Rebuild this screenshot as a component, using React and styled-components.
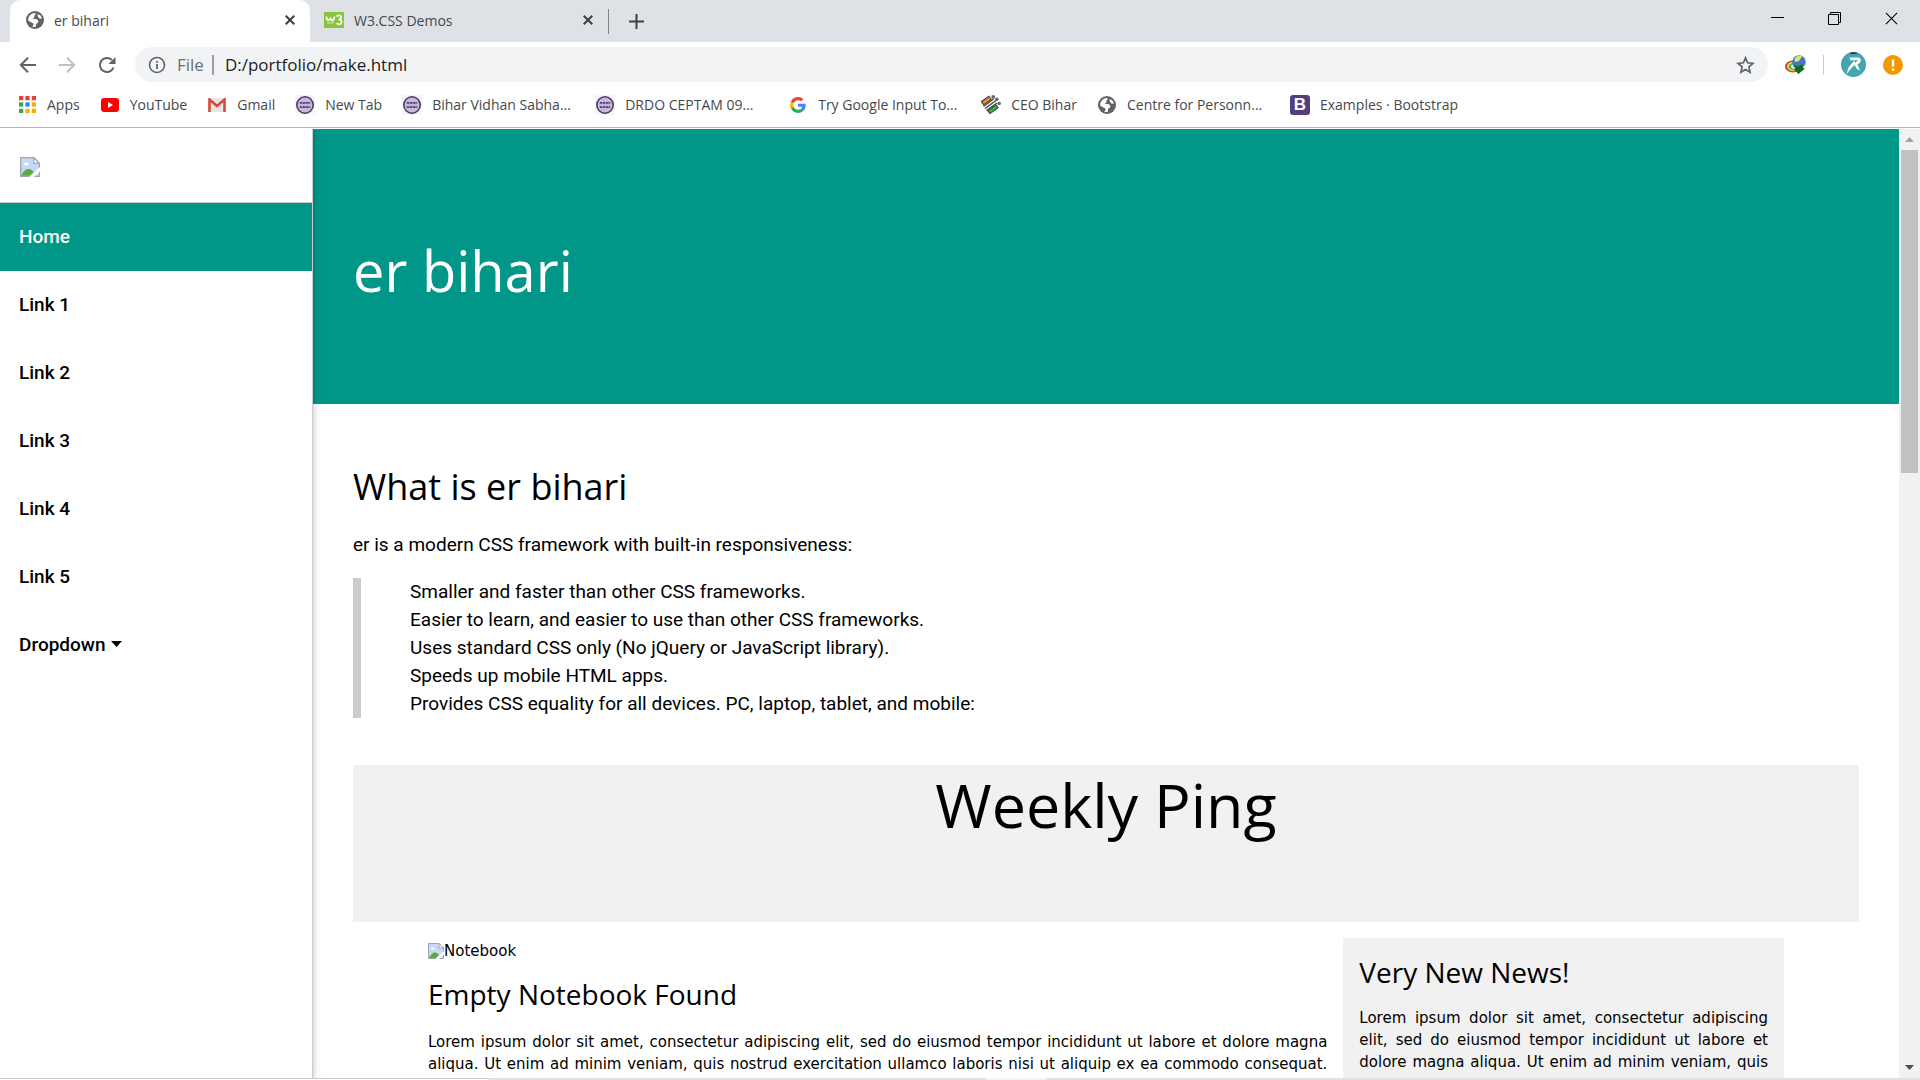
import React from "react";
import styled, { createGlobalStyle, css } from "styled-components";

const UI = '"Open Sans", "Noto Sans", sans-serif';
const BODY = 'Roboto, sans-serif';
const WIDE = '"DejaVu Sans", sans-serif';
const TEAL = "#009688";

const Global = createGlobalStyle`
  *, *::before, *::after { box-sizing: border-box; }
  html, body, #root { height: 100%; margin: 0; }
  body { background: #fff; color: #000; font-family: ${BODY}; overflow: hidden; }
  h1, h2, p, ul { margin: 0; padding: 0; font-weight: 400; }
  button { border: 0; background: none; padding: 0; font: inherit; color: inherit; }
  a { color: inherit; text-decoration: none; }
  svg { display: block; flex: none; }
`;

const Window = styled.div`
  display: flex;
  flex-direction: column;
  height: 100vh;
`;

/* Browser frame */
const TabStrip = styled.div`
  display: flex;
  height: 42px;
  padding-left: 10px;
  background: #dee1e6;
  font-family: ${UI};
  font-size: 14px;
  color: #45494d;
`;

const Tab = styled.div`
  display: flex;
  align-items: center;
  gap: 10px;
  width: ${(p) => (p.$active ? 300 : 298)}px;
  padding: 0 15px 2px ${(p) => (p.$active ? 16 : 14)}px;
  border-radius: 10px 10px 0 0;
  background: ${(p) => (p.$active ? "#fff" : "transparent")};
`;

const TabTitle = styled.span`
  flex: 1;
`;

const TabDivider = styled.span`
  width: 1px;
  height: 25px;
  margin-top: 9px;
  background: #80868b;
`;

const NewTab = styled.button`
  display: grid;
  place-items: center;
  width: 54px;
`;

const WindowControls = styled.div`
  display: flex;
  margin-left: auto;
  height: 36px;
`;

const WindowButton = styled.button`
  display: grid;
  place-items: center;
  width: 57px;
`;

const Toolbar = styled.div`
  display: flex;
  align-items: center;
  height: 45px;
  padding: 0 17px 0 15px;
`;

const NavButton = styled.button`
  display: grid;
  place-items: center;
  width: 24px;
  margin-right: 16px;
`;

const AddressBar = styled.label`
  display: flex;
  align-items: center;
  flex: 1;
  height: 35px;
  padding: 0 13px;
  border-radius: 18px;
  background: #f1f3f4;
  font-family: ${UI};
  font-size: 17px;
  color: #6b6f73;
`;

const Scheme = styled.span`
  margin-left: 11px;
  padding-right: 8px;
  border-right: 2px solid #9b9fa3;
  line-height: 20px;
`;

const Address = styled.input`
  flex: 1;
  border: 0;
  outline: 0;
  padding: 0;
  margin-left: 11px;
  background: none;
  font: inherit;
  color: #202124;
`;

const Extensions = styled.div`
  display: flex;
  align-items: center;
  gap: 17px;
  margin-left: 17px;
`;

const ToolDivider = styled.span`
  width: 1px;
  height: 20px;
  background: #c9ccd0;
`;

const Bookmarks = styled.nav`
  display: flex;
  align-items: center;
  gap: 20px;
  height: 41px;
  padding: 0 17px 5px;
  border-bottom: 1px solid #b5b5b5;
  margin-bottom: 1px;
  font-family: ${UI};
  font-size: 14px;
  color: #45494d;
`;

const Bookmark = styled.a`
  display: grid;
  grid-template-columns: 20px ${(p) => (p.$long ? "143px" : "auto")};
  align-items: center;
  gap: 10px;
  white-space: nowrap;
`;

const BookmarkIcon = styled.span`
  display: grid;
  place-items: center;
`;

/* Page */
const Viewport = styled.div`
  display: flex;
  flex: 1;
  min-height: 0;
  overflow: hidden;
`;

const Sidebar = styled.nav`
  z-index: 1;
  width: 313px;
  flex: none;
  border-right: 1px solid #ccc;
  box-shadow: 0 2px 5px rgba(0, 0, 0, 0.16), 0 2px 10px rgba(0, 0, 0, 0.12);
  background: #fff;
`;

const LogoLink = styled.a`
  display: block;
  height: 74px;
  padding: 28px 20px 0;
  border-bottom: 1px solid #ccc;
`;

const itemStyle = css`
  display: flex;
  align-items: center;
  gap: 5px;
  width: 100%;
  height: 68px;
  padding: 0 19px 2px;
  font-family: ${BODY};
  font-size: 19px;
  font-weight: 500;
`;

const SideLink = styled.a`
  ${itemStyle}
  ${(p) => p.$active && css`
    background: ${TEAL};
    color: #fff;
  `}
`;

const SideButton = styled.button`
  && { ${itemStyle} }
`;

const Main = styled.main`
  flex: 1;
  min-width: 0;
  overflow: hidden;
`;

const Hero = styled.header`
  display: flex;
  align-items: center;
  height: 275px;
  padding: 6px 40px 0;
  background: ${TEAL};
  color: #fff;
`;

const Heading = styled.h2`
  font-family: ${UI};
  font-size: ${(p) => p.$size}px;
  line-height: ${(p) => p.$line}px;
`;

const Content = styled.div`
  padding: 54px 40px 0;
`;

const Intro = styled.p`
  margin-top: 15px;
  font-size: 19px;
  line-height: 28px;
`;

const Points = styled.ul`
  margin-top: 19px;
  padding-left: 49px;
  border-left: 8px solid #ccc;
  list-style: none;
  font-size: 19px;
  line-height: 28px;
`;

const Banner = styled.section`
  height: 157px;
  margin-top: 47px;
  background: #f1f1f1;
  text-align: center;
`;

const Columns = styled.div`
  display: grid;
  grid-template-columns: minmax(0, 900fr) minmax(0, 441fr);
  gap: 16px;
  padding: 16px 75px 0;
  font-family: ${WIDE};
  font-size: 15px;
  line-height: 22px;
`;

const News = styled.aside`
  padding: 12px 16px 40px;
  background: #f1f1f1;
`;

const Figure = styled.div`
  display: flex;
  align-items: center;
  height: 26px;
`;

const Copy = styled.p`
  margin-top: ${(p) => p.$gap}px;
  text-align: justify;
  text-align-last: justify;
`;

const ArticleTitle = styled(Heading)`
  margin-top: 12px;
`;

const Scrollbar = styled.div`
  display: flex;
  flex-direction: column;
  align-items: center;
  justify-content: space-between;
  width: 21px;
  background: #f1f1f1;
`;

const ScrollTop = styled.div`
  display: flex;
  flex-direction: column;
  align-items: center;
`;

const ScrollArrow = styled.button`
  display: grid;
  place-items: center;
  width: 17px;
  height: 21px;
`;

const Thumb = styled.div`
  width: 17px;
  height: 323px;
  background: #c1c1c1;
`;

const BottomEdge = styled.div`
  display: flex;
  height: 2px;
  flex: none;
  background: #e1e1e1;
`;

const EdgeField = styled.span`
  width: 489px;
  border-top: 1px solid #c8c8c8;
  background: #fff;
`;

const EdgeHighlight = styled.span`
  width: 61px;
  margin-left: 497px;
  background: #f4f4f4;
`;

const Globe = ({ size = 18 }) => (
  <svg width={size} height={size} viewBox="0 0 18 18">
    <circle cx="9" cy="9" r="9" fill="#5f6368" />
    <path d="M2.200 7.500C3 4.500 5.500 2.300 8.600 2L10 3 8.400 4.600v1.800L6.600 8h3.800l1.800 1.600v2l-2 1.200-.6 3.200c-1.200.2-2.400 0-3.400-.5C8 14 8 12.600 6.400 12L2.300 9.800z M11.500 3l3 1.600 1.500 3.200-2.600-.2-1.600-2z" fill="#fff" />
  </svg>
);

const Cross = ({ s = 10, w = 2, c = "#3c4043" }) => (
  <svg width={s} height={s} viewBox="0 0 10 10" stroke={c} strokeWidth={w}>
    <path d="M.7.7l8.6 8.6M9.3.7L.7 9.3" />
  </svg>
);

const W3Icon = () => (
  <svg width="20" height="16" viewBox="0 0 20 16">
    <rect width="20" height="16" rx="1" fill="#8ac33e" />
    <path d="M2.500 4.500c0 5 3.500 4.500 4 1 0 4 3.500 4 4-1M12.500 4.500c2-2 5-1 4.500 1 0 1.500-1.500 2-2.500 2 2 0 3.500 1 3 3s-3.500 2.500-4.800.5" fill="none" stroke="#fff" strokeWidth="1.700" />
    <path d="M3 10.800h7" stroke="#d8efb9" strokeWidth="1" />
  </svg>
);

const AppsIcon = () => (
  <svg width="17" height="17" viewBox="0 0 16 16">
    {["#ea4335", "#ea4335", "#ea4335", "#34a853", "#1a8cff", "#fbab00", "#34a853", "#fbab00", "#fbab00"].map((c, i) => (
      <rect key={i} x={(i % 3) * 6} y={Math.floor(i / 3) * 6} width="4" height="4" fill={c} />
    ))}
  </svg>
);

const YouTubeIcon = () => (
  <svg width="18" height="14" viewBox="0 0 18 14">
    <rect width="18" height="14" rx="3" fill="#f00" />
    <path d="M7 4l5 3-5 3z" fill="#fff" />
  </svg>
);

const GmailIcon = () => (
  <svg width="18" height="14" viewBox="0 0 18 14">
    <rect width="18" height="14" rx="1" fill="#e8e6e5" />
    <path d="M1.500 14V1.500L9 8l7.500-6.500V14" fill="none" stroke="#d54b3d" strokeWidth="2.600" />
  </svg>
);

const SealIcon = () => (
  <svg width="20" height="20" viewBox="0 0 19 19">
    <rect width="19" height="19" fill="#f5f4fa" />
    <circle cx="9.500" cy="9.500" r="7.800" fill="#c9b8d8" stroke="#4a3b62" strokeWidth="1.500" />
    <path d="M4.500 7.500h10M4.500 11.500h10" stroke="#3b478e" strokeWidth="1.800" strokeDasharray="2.500 .5" />
    <path d="M5 9.500h9" stroke="#e3a5b4" strokeWidth="1" />
  </svg>
);

const GoogleIcon = () => (
  <svg width="16" height="16" viewBox="0 0 48 48">
    <path fill="#EA4335" d="M24 9.500c3.540 0 6.710 1.220 9.210 3.600l6.850-6.850C35.900 2.380 30.470 0 24 0 14.620 0 6.510 5.380 2.560 13.220l7.980 6.190C12.430 13.720 17.740 9.500 24 9.500z" />
    <path fill="#4285F4" d="M46.980 24.550c0-1.570-.15-3.090-.38-4.550H24v9.020h12.940c-.58 2.960-2.260 5.480-4.780 7.180l7.730 6c4.510-4.180 7.090-10.360 7.090-17.650z" />
    <path fill="#FBBC05" d="M10.530 28.590c-.48-1.450-.76-2.990-.76-4.590s.27-3.140.76-4.590l-7.980-6.190C.92 16.460 0 20.120 0 24s.92 7.540 2.560 10.780l7.970-6.190z" />
    <path fill="#34A853" d="M24 48c6.480 0 11.930-2.130 15.890-5.810l-7.730-6c-2.150 1.450-4.920 2.300-8.160 2.300-6.260 0-11.570-4.220-13.470-9.910l-7.980 6.190C6.510 42.620 14.620 48 24 48z" />
  </svg>
);

const ElectionIcon = () => (
  <svg width="20" height="19" viewBox="0 0 20 19">
    <path d="M1 8.500L9.500 2.500" stroke="#333" strokeWidth="5" />
    <path d="M2 8L9 3" stroke="#ee8434" strokeWidth="3" />
    <path d="M2.500 11.500L12.500 4" stroke="#444" strokeWidth="1.400" />
    <path d="M4 13.500L15 5.500" stroke="#444" strokeWidth="1.400" />
    <path d="M5.500 15.500L16 8" stroke="#444" strokeWidth="1.400" />
    <path d="M7.500 17.500L16.500 11" stroke="#333" strokeWidth="4.600" />
    <path d="M8.200 17L15.800 11.500" stroke="#3fa83a" strokeWidth="2.800" />
    <circle cx="12.200" cy="1.900" r="1.900" fill="#666" />
    <circle cx="15.800" cy="4.200" r="1.700" fill="#666" />
    <circle cx="18.200" cy="8.500" r="1.800" fill="#666" />
  </svg>
);

const BootstrapBadge = styled.span`
  display: grid;
  place-items: center;
  width: 20px;
  height: 20px;
  border-radius: 3px;
  background: #563d7c;
  color: #fff;
  font: 700 17px/20px "Liberation Sans", sans-serif;
`;

const BrokenImage = ({ s = 20 }) => (
  <svg width={s} height={s} viewBox="0 0 16 16">
    <path d="M.5.500h10.500L15.500 5v10.500H.5z" fill="#c6d8f8" stroke="#a5a5a5" />
    <path d="M11 .5V5h4.500z" fill="#fff" stroke="#a5a5a5" />
    <path d="M3 6c0-1.500 2-2 2.500-1C7 4.500 7.500 6 6.500 6.500H3z" fill="#fff" />
    <path d="M1 15c2-5 6-7 9-4l1 1-3 3z" fill="#59ab3b" />
    <path d="M7.500 16L16 8v3.500L11 16z" fill="#fff" />
  </svg>
);

const bookmarks = [
  { icon: <AppsIcon />, label: "Apps" },
  { icon: <YouTubeIcon />, label: "YouTube" },
  { icon: <GmailIcon />, label: "Gmail" },
  { icon: <SealIcon />, label: "New Tab" },
  { icon: <SealIcon />, label: "Bihar Vidhan Sabha...", long: true },
  { icon: <SealIcon />, label: "DRDO CEPTAM 09...", long: true },
  { icon: <GoogleIcon />, label: "Try Google Input To...", long: true },
  { icon: <ElectionIcon />, label: "CEO Bihar" },
  { icon: <Globe />, label: "Centre for Personn...", long: true },
  { icon: <BootstrapBadge>B</BootstrapBadge>, label: "Examples · Bootstrap" },
];

const points = [
  "Smaller and faster than other CSS frameworks.",
  "Easier to learn, and easier to use than other CSS frameworks.",
  "Uses standard CSS only (No jQuery or JavaScript library).",
  "Speeds up mobile HTML apps.",
  "Provides CSS equality for all devices. PC, laptop, tablet, and mobile:",
];

const newsText =
  "Lorem ipsum dolor sit amet, consectetur adipiscing elit, sed do eiusmod tempor incididunt ut labore et dolore magna aliqua. Ut enim ad minim veniam, quis";
const articleText =
  newsText + " nostrud exercitation ullamco laboris nisi ut aliquip ex ea commodo consequat.";

export default function App() {
  return (
    <Window>
      <Global />
      <TabStrip>
        <Tab $active>
          <Globe />
          <TabTitle>er bihari</TabTitle>
          <button aria-label="Close er bihari"><Cross /></button>
        </Tab>
        <Tab>
          <W3Icon />
          <TabTitle>W3.CSS Demos</TabTitle>
          <button aria-label="Close W3.CSS Demos"><Cross /></button>
        </Tab>
        <TabDivider />
        <NewTab aria-label="New tab">
          <svg width="15" height="15" viewBox="0 0 15 15" stroke="#3c4043" strokeWidth="2"><path d="M7.500 0v15M0 7.500h15" /></svg>
        </NewTab>
        <WindowControls>
          <WindowButton aria-label="Minimize">
            <svg width="13" height="13" viewBox="0 0 13 13" stroke="#000"><path d="M0 5.500h13" /></svg>
          </WindowButton>
          <WindowButton aria-label="Restore">
            <svg width="13" height="13" viewBox="0 0 13 13" fill="none" stroke="#000"><path d="M.5 2.500h10v10H.5zM2.500 2.500v-2h10v10h-2" /></svg>
          </WindowButton>
          <WindowButton aria-label="Close window"><Cross s={13} w={0.8} c="#000" /></WindowButton>
        </WindowControls>
      </TabStrip>

      <Toolbar>
        <NavButton aria-label="Back">
          <svg width="17" height="16" viewBox="0 0 17 16" fill="none" stroke="#5f6368" strokeWidth="2"><path d="M17 8H2M9 .8L1.800 8 9 15.200" /></svg>
        </NavButton>
        <NavButton aria-label="Forward">
          <svg width="17" height="16" viewBox="0 0 17 16" fill="none" stroke="#bdc0c4" strokeWidth="2"><path d="M0 8h15M8 .8L15.200 8 8 15.200" /></svg>
        </NavButton>
        <NavButton aria-label="Reload">
          <svg width="18" height="18" viewBox="0 0 18 18"><path d="M15.500 11.500A7 7 0 1 1 13.800 4" fill="none" stroke="#5f6368" strokeWidth="2" /><path d="M17.500 1v7h-7z" fill="#5f6368" /></svg>
        </NavButton>
        <AddressBar>
          <svg width="18" height="18" viewBox="0 0 18 18"><circle cx="9" cy="9" r="7.500" fill="none" stroke="#5f6368" strokeWidth="1.600" /><path d="M9 8v5M9 5v1.800" stroke="#5f6368" strokeWidth="1.800" /></svg>
          <Scheme>File</Scheme>
          <Address aria-label="Address" defaultValue="D:/portfolio/make.html" />
          <svg width="19" height="18" viewBox="0 0 19 18"><path d="M9.500 1.800l2.100 5 5.400.5-4.100 3.600 1.200 5.300-4.600-2.800-4.600 2.800 1.200-5.300L2 7.300l5.400-.5z" fill="none" stroke="#5f6368" strokeWidth="1.700" /></svg>
        </AddressBar>
        <Extensions>
          <svg width="21" height="19" viewBox="0 0 21 19">
            <ellipse cx="8" cy="11.500" rx="8" ry="6" fill="#c5402f" />
            <ellipse cx="8.500" cy="11.500" rx="6.600" ry="4.800" fill="#f3d335" />
            <ellipse cx="9" cy="11.500" rx="5.200" ry="3.600" fill="#4bb04a" />
            <ellipse cx="9.500" cy="11.500" rx="3.600" ry="2.300" fill="#e6e6f5" />
            <circle cx="14" cy="7" r="6.800" fill="#3f78c4" />
            <path d="M9.500 4c1.500-3.500 6-4 7.500-2.500L14 6l-4 1z" fill="#e3e66a" />
            <path d="M20.500 9c-.5 3-3 5-6 4.800l3-3z" fill="#b9bd3a" />
            <path d="M8 10l5 1.500 5-2.500v4l2 .5-6.500 5.500L9 14.500l1.500-1z" fill="#146a1e" />
          </svg>
          <ToolDivider />
          <svg width="25" height="25" viewBox="0 0 25 25">
            <circle cx="12.500" cy="12.500" r="12.500" fill="#42a5b0" />
            <path d="M8 1a12.500 12.500 0 0 1 9 0l-2 .8h-5z" fill="#222" />
            <path d="M8.500 5.500h8.500c4 0 3.500 5.500-.5 7l2.500 6-3-1.500-2.500-4-3.500 3.500-4.500 5.500 2-6.500 4.500-5.500 2.500-2-5 .5z" fill="#fff" />
            <path d="M14 8l3 .2-3.500 3z" fill="#42a5b0" />
          </svg>
          <svg width="20" height="20" viewBox="0 0 20 20"><circle cx="10" cy="10" r="10" fill="#f29900" /><path d="M10 4.500v7M10 13.500v2.300" stroke="#fff" strokeWidth="2.400" /></svg>
        </Extensions>
      </Toolbar>

      <Bookmarks>
        {bookmarks.map(({ icon, label, long }) => (
          <Bookmark key={label} href="#" $long={long}>
            <BookmarkIcon>{icon}</BookmarkIcon>
            {label}
          </Bookmark>
        ))}
      </Bookmarks>

      <Viewport>
        <Sidebar>
          <LogoLink href="#" aria-label="Logo"><BrokenImage /></LogoLink>
          <SideLink href="#" $active>Home</SideLink>
          {[1, 2, 3, 4, 5].map((n) => <SideLink href="#" key={n}>Link {n}</SideLink>)}
          <SideButton>
            Dropdown
            <svg width="11" height="6" viewBox="0 0 11 6"><path d="M0 0h11L5.500 6z" /></svg>
          </SideButton>
        </Sidebar>
        <Main>
          <Hero><Heading as="h1" $size={56} $line={96}>er bihari</Heading></Hero>
          <Content>
            <Heading $size={36} $line={58}>What is er bihari</Heading>
            <Intro>er is a modern CSS framework with built-in responsiveness:</Intro>
            <Points>{points.map((t) => <li key={t}>{t}</li>)}</Points>
            <Banner><Heading $size={61} $line={80}>Weekly Ping</Heading></Banner>
            <Columns>
              <article>
                <Figure><BrokenImage s={16} />Notebook</Figure>
                <ArticleTitle $size={28} $line={36}>Empty Notebook Found</ArticleTitle>
                <Copy $gap={19}>{articleText}</Copy>
              </article>
              <News>
                <Heading $size={28} $line={44}>Very New News!</Heading>
                <Copy $gap={13}>{newsText}</Copy>
              </News>
            </Columns>
          </Content>
        </Main>
        <Scrollbar>
          <ScrollTop>
            <ScrollArrow aria-label="Scroll up"><svg width="9" height="5" viewBox="0 0 9 5"><path d="M0 5h9L4.500 0z" fill="#a3a3a3" /></svg></ScrollArrow>
            <Thumb />
          </ScrollTop>
          <ScrollArrow aria-label="Scroll down"><svg width="9" height="5" viewBox="0 0 9 5"><path d="M0 0h9L4.500 5z" fill="#505050" /></svg></ScrollArrow>
        </Scrollbar>
      </Viewport>
      <BottomEdge><EdgeField /><EdgeHighlight /></BottomEdge>
    </Window>
  );
}
